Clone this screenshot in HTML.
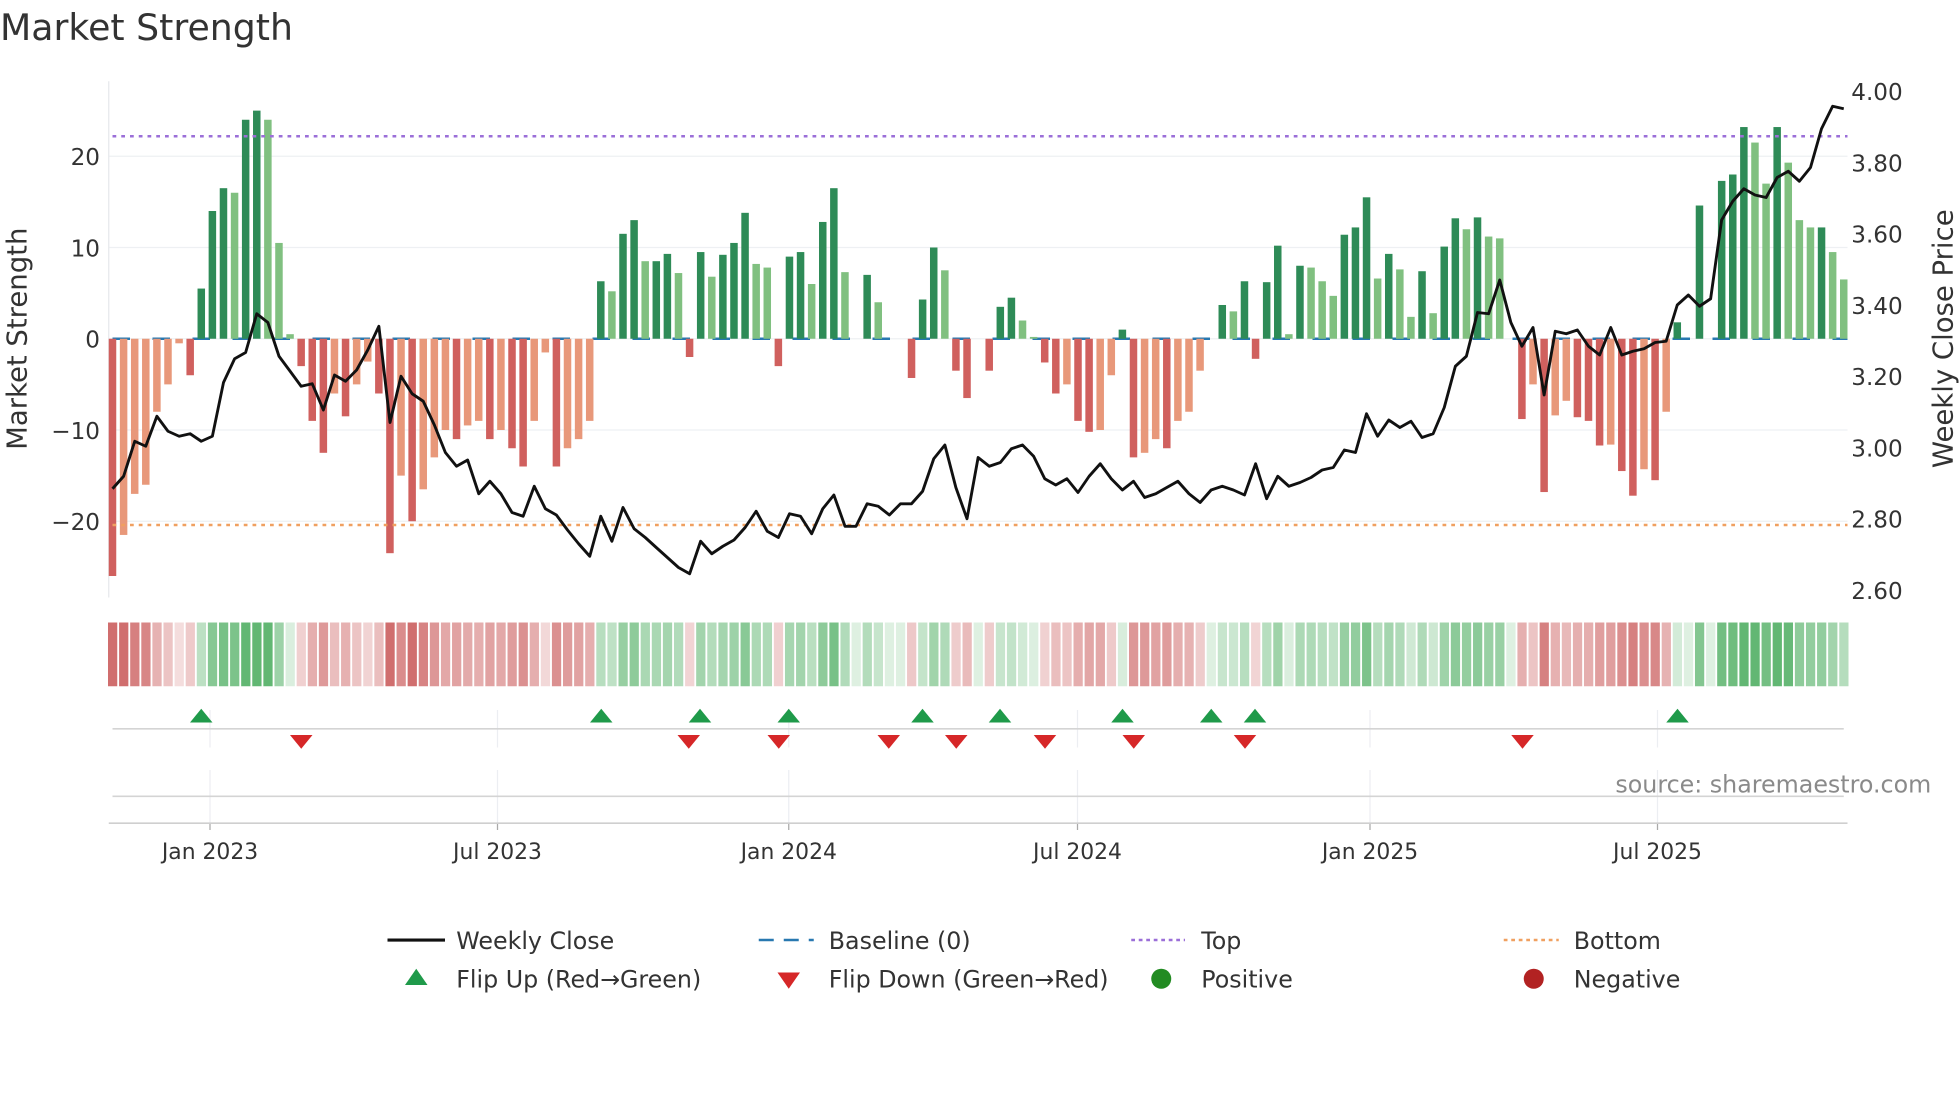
<!DOCTYPE html>
<html><head><meta charset="utf-8"><style>
html,body{margin:0;padding:0;background:#fff;width:1960px;height:1102px;overflow:hidden}
svg{display:block}
text{font-family:"DejaVu Sans","Liberation Sans",sans-serif;fill:#333}
</style></head><body>
<svg id="s" width="1960" height="1102" viewBox="0 0 1568 881.6" xmlns="http://www.w3.org/2000/svg">
<text x="0" y="32" font-size="29">Market Strength</text>
<g id="grid"></g>
<g id="bars"></g>
<g id="heat"></g>
<g id="marks"></g>
<text x="80" y="132" font-size="18.5" text-anchor="end">20</text>
<text x="80" y="205" font-size="18.5" text-anchor="end">10</text>
<text x="80" y="278" font-size="18.5" text-anchor="end">0</text>
<text x="80" y="351" font-size="18.5" text-anchor="end">−10</text>
<text x="80" y="424" font-size="18.5" text-anchor="end">−20</text>
<text x="1481" y="80" font-size="18.5">4.00</text>
<text x="1481" y="137" font-size="18.5">3.80</text>
<text x="1481" y="194" font-size="18.5">3.60</text>
<text x="1481" y="251" font-size="18.5">3.40</text>
<text x="1481" y="308" font-size="18.5">3.20</text>
<text x="1481" y="365" font-size="18.5">3.00</text>
<text x="1481" y="422" font-size="18.5">2.80</text>
<text x="1481" y="479" font-size="18.5">2.60</text>
<text transform="translate(21,271) rotate(-90)" font-size="22" text-anchor="middle">Market Strength</text>
<text transform="translate(1562,271) rotate(-90)" font-size="22" text-anchor="middle">Weekly Close Price</text>
<text x="1545" y="634" font-size="19" text-anchor="end" style="fill:#8a8a8a">source: sharemaestro.com</text>
<text x="168" y="687" font-size="17.5" text-anchor="middle">Jan 2023</text>
<text x="398" y="687" font-size="17.5" text-anchor="middle">Jul 2023</text>
<text x="631" y="687" font-size="17.5" text-anchor="middle">Jan 2024</text>
<text x="862" y="687" font-size="17.5" text-anchor="middle">Jul 2024</text>
<text x="1096" y="687" font-size="17.5" text-anchor="middle">Jan 2025</text>
<text x="1326" y="687" font-size="17.5" text-anchor="middle">Jul 2025</text>
<line x1="310" y1="752" x2="356" y2="752" stroke="#111" stroke-width="2.5"/>
<text x="365" y="759" font-size="19">Weekly Close</text>
<line x1="607" y1="752" x2="651" y2="752" stroke="#2878b0" stroke-width="2" stroke-dasharray="12 8"/>
<text x="663" y="759" font-size="19">Baseline (0)</text>
<line x1="905" y1="752" x2="948" y2="752" stroke="#9b6fd8" stroke-width="2" stroke-dasharray="3 3"/>
<text x="961" y="759" font-size="19">Top</text>
<line x1="1203" y1="752" x2="1247" y2="752" stroke="#f0a060" stroke-width="2" stroke-dasharray="3 3"/>
<text x="1259" y="759" font-size="19">Bottom</text>
<polygon points="324,788 342,788 333,775" fill="#1f9a4a"/>
<text x="365" y="790" font-size="19">Flip Up (Red→Green)</text>
<polygon points="622,778 640,778 631,791" fill="#d62728"/>
<text x="663" y="790" font-size="19">Flip Down (Green→Red)</text>
<circle cx="929" cy="783" r="8" fill="#228b22"/>
<text x="961" y="790" font-size="19">Positive</text>
<circle cx="1227" cy="783" r="8" fill="#b22222"/>
<text x="1259" y="790" font-size="19">Negative</text>
</svg>
<script>
var NS="http://www.w3.org/2000/svg";
function el(p,n,a){var e=document.createElementNS(NS,n);for(var k in a)e.setAttribute(k,a[k]);document.getElementById(p).appendChild(e);return e;}
var v=[-26,-21.5,-17,-16,-8,-5,-0.5,-4,5.5,14,16.5,16,24,25,24,10.5,0.5,-3,-9,-12.5,-6,-8.5,-5,-2.5,-6,-23.5,-15,-20,-16.5,-13,-10,-11,-9.5,-9,-11,-10,-12,-14,-9,-1.5,-14,-12,-11,-9,6.3,5.2,11.5,13,8.5,8.5,9.3,7.2,-2,9.5,6.8,9.2,10.5,13.8,8.2,7.8,-3,9,9.5,6,12.8,16.5,7.3,0,7,4,0,0,-4.3,4.3,10,7.5,-3.5,-6.5,0,-3.5,3.5,4.5,2,0.2,-2.6,-6,-5,-9,-10.2,-10,-4,1,-13,-12.5,-11,-12,-9,-8,-3.5,0,3.7,3,6.3,-2.2,6.2,10.2,0.5,8,7.8,6.3,4.7,11.4,12.2,15.5,6.6,9.3,7.6,2.4,7.4,2.8,10.1,13.2,12,13.3,11.2,11,0,-8.8,-5,-16.8,-8.4,-6.8,-8.6,-9,-11.7,-11.6,-14.5,-17.2,-14.3,-15.5,-8,1.8,0,14.6,0,17.3,18,23.2,21.5,17,23.2,19.3,13,12.2,12.2,9.5,6.5];
var N=v.length,x0=90,dx=(1475-90)/(N-1);
function Y(m){return 271-m*7.3;}
[20,10,0,-10,-20].forEach(function(m){el("grid","line",{x1:87,x2:1478,y1:Y(m),y2:Y(m),stroke:"#eef0f3","stroke-width":1});});
el("grid","line",{x1:87,x2:87,y1:65,y2:478,stroke:"#e6e8ec","stroke-width":1});
[168,398,631,862,1096,1326].forEach(function(x){
 el("grid","line",{x1:x,x2:x,y1:568,y2:598,stroke:"#eceef2","stroke-width":1});
 el("grid","line",{x1:x,x2:x,y1:616,y2:658,stroke:"#eceef2","stroke-width":1});
 el("grid","line",{x1:x,x2:x,y1:658,y2:664,stroke:"#aaa","stroke-width":1});
});
el("grid","line",{x1:90,x2:1475,y1:583,y2:583,stroke:"#d4d4d4","stroke-width":1.3});
el("grid","line",{x1:90,x2:1475,y1:637,y2:637,stroke:"#d4d4d4","stroke-width":1.3});
el("grid","line",{x1:87,x2:1478,y1:658.5,y2:658.5,stroke:"#cfcfcf","stroke-width":1.3});
el("bars","line",{x1:90,x2:1478,y1:271,y2:271,stroke:"#2878b0","stroke-width":2,"stroke-dasharray":"14 18"});
for(var i=0;i<N;i++){
 var x=x0+i*dx,m=v[i],p=i?v[i-1]:0,c;
 if(m>=0)c=(m>=p)?"#2e8b57":"#80c080";else c=(m<=p)?"#d0605e":"#e8987a";
 var h=Math.abs(m)*7.3; if(h<0.6&&m!==0)h=1;
 el("bars","rect",{x:x-3,y:m>=0?271-h:271,width:6,height:h,fill:c});
 var a=Math.min(0.85,0.18+Math.abs(m)/30);
 var hc=m>=0?"rgba(70,170,90,"+a.toFixed(2)+")":"rgba(200,85,85,"+a.toFixed(2)+")";
 el("heat","rect",{x:x-3.6,y:498,width:7.4,height:51,fill:hc});
}
el("bars","line",{x1:90,x2:1478,y1:109,y2:109,stroke:"#9b6fd8","stroke-width":2,"stroke-dasharray":"3 4"});
el("bars","line",{x1:90,x2:1478,y1:420,y2:420,stroke:"#f0a060","stroke-width":2,"stroke-dasharray":"3 4"});
var pr=[391,381,353,357,333,345,349,347,353,349,306,287,282,251,258,285,297,309,307,328,300,305,296,280,261,338,301,315,321,340,362,373,368,395,385,395,410,413,389,407,412,424,435,445,413,433,406,423,430,438,446,454,459,433,443,437,432,422,409,425,430,411,413,427,407,396,421,421,403,405,412,403,403,393,367,356,390,415,366,373,370,359,356,365,383,388,383,394,381,371,383,392,385,398,395,390,385,395,402,392,389,392,396,371,399,381,389,386,382,376,374,360,362,331,349,336,342,337,350,347,326,293,285,250,251,224,258,277,262,316,265,267,264,277,284,262,284,281,279,274,273,244,236,245,239,176,161,151,156,158,142,137,145,134,103,85,87];
var d="",pdx=(1475-90)/(pr.length-1);
for(var j=0;j<pr.length;j++)d+=(j?"L":"M")+(90+j*pdx).toFixed(1)+","+pr[j];
el("bars","path",{d:d,fill:"none",stroke:"#111","stroke-width":2.3,"stroke-linejoin":"round"});
[161,481,560,631,738,800,898,969,1004,1342].forEach(function(x){el("marks","polygon",{points:(x-9)+",578 "+(x+9)+",578 "+x+",567",fill:"#1f9a4a"});});
[241,551,623,711,765,836,907,996,1218].forEach(function(x){el("marks","polygon",{points:(x-9)+",588 "+(x+9)+",588 "+x+",599",fill:"#d62728"});});
</script>
</body></html>
